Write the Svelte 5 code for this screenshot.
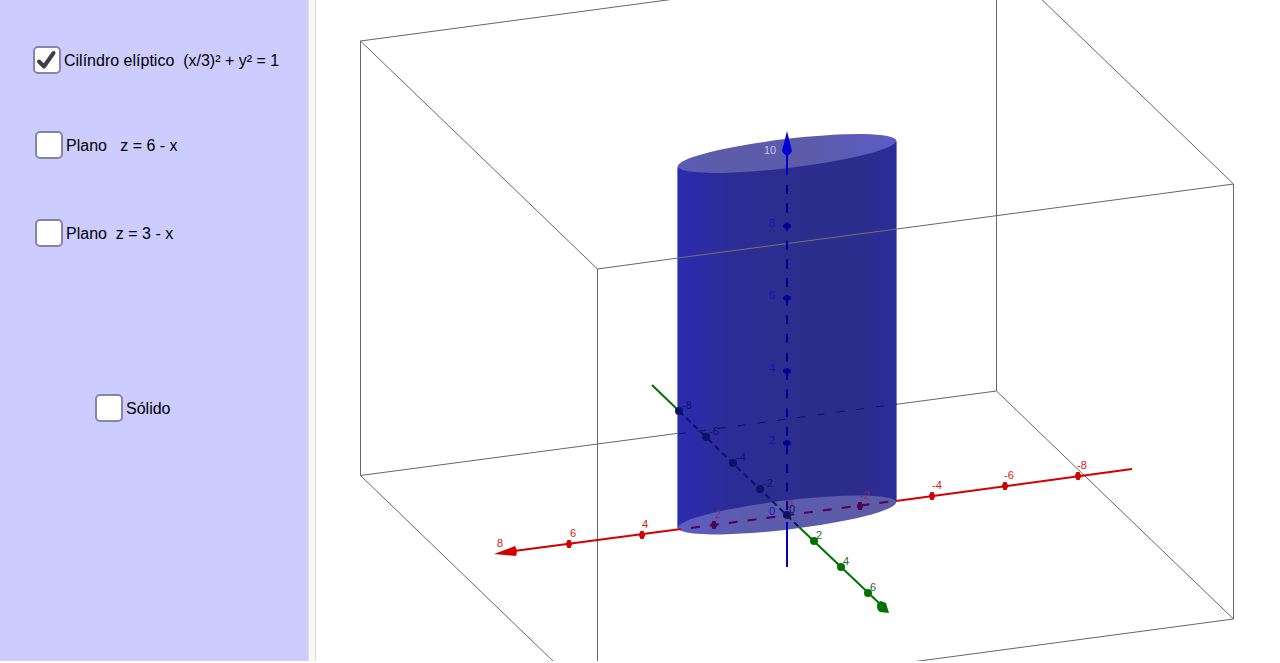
<script>
  let options = $state([
    { id: 'cylinder', label: 'Cilíndro elíptico  (x/3)² + y² = 1', checked: true },
    { id: 'plane-six', label: 'Plano   z = 6 - x', checked: false },
    { id: 'plane-three', label: 'Plano  z = 3 - x', checked: false },
    { id: 'solid', label: 'Sólido', checked: false }
  ]);

  const showCylinder = $derived(options[0].checked);

  const redTicks = [
    { x: 569, y: 544, label: '6', lx: 570, ly: 537 },
    { x: 642, y: 535, label: '4', lx: 642, ly: 528 },
    { x: 932, y: 496, label: '-4', lx: 932, ly: 489 },
    { x: 1005, y: 486, label: '-6', lx: 1004, ly: 479 },
    { x: 1078, y: 476, label: '-8', lx: 1077, ly: 469 }
  ];
  const innerRedTicks = [
    { x: 714, y: 525, label: '2', lx: 715, ly: 518 },
    { x: 860, y: 506, label: '-2', lx: 860, ly: 499 }
  ];
  const greenTicks = [
    { x: 814, y: 541, label: '2', lx: 816, ly: 539 },
    { x: 841, y: 567, label: '4', lx: 843, ly: 565 },
    { x: 868, y: 593, label: '6', lx: 870, ly: 591 }
  ];
  const innerGreenTicks = [
    { x: 679, y: 411, label: '-8', lx: 682, ly: 409 },
    { x: 706, y: 437, label: '-6', lx: 709, ly: 435 },
    { x: 733, y: 463, label: '-4', lx: 736, ly: 461 },
    { x: 760, y: 489, label: '-2', lx: 763, ly: 487 }
  ];
  const blueTicks = [
    { y: 226, label: '8' },
    { y: 298, label: '6' },
    { y: 371, label: '4' },
    { y: 443, label: '2' }
  ];
</script>

<main class="applet">
  <section class="panel" aria-label="Opções">
    {#each options as option (option.id)}
      <div class="option {option.id}">
        <span class="box">
          <input id={option.id} type="checkbox" bind:checked={option.checked} />
          {#if option.checked}
            <svg class="tick" viewBox="0 0 28 28" aria-hidden="true">
              <path d="M6 15.5 11 20.5 20.500 7" />
            </svg>
          {/if}
        </span>
        <label for={option.id}>{option.label}</label>
      </div>
    {/each}
  </section>
  <div class="divider"></div>
  <svg class="scene" viewBox="316 0 964 661">
    <defs>
      <linearGradient id="wall" x1="0" x2="1" y1="0" y2="0">
        <stop offset="0" stop-color="#2b2bb0" />
        <stop offset="0.06" stop-color="#2b2baa" />
        <stop offset="0.22" stop-color="#2c2c98" />
        <stop offset="0.5" stop-color="#2d2d8e" />
        <stop offset="0.85" stop-color="#2c2c8d" />
        <stop offset="1" stop-color="#2c2c98" />
      </linearGradient>
      <linearGradient id="cap" x1="0" x2="1" y1="0" y2="0">
        <stop offset="0" stop-color="#5c5cb4" />
        <stop offset="0.2" stop-color="#5c5ca9" />
        <stop offset="0.6" stop-color="#5c5cab" />
        <stop offset="1" stop-color="#5b5bc4" />
      </linearGradient>
      <linearGradient id="base" x1="0" x2="1" y1="0" y2="0">
        <stop offset="0" stop-color="#5c5cc2" />
        <stop offset="0.3" stop-color="#5c5caf" />
        <stop offset="1" stop-color="#5c5ca8" />
      </linearGradient>
    </defs>

    <path class="edge" d="M360.500 475.500 996.500 391V-44L360.500 41ZM996.500 391 1233.500 619M996.500 -44 1233.500 184" />

    {#if showCylinder}
      <path fill="url(#wall)" d="M677.500 167 896.500 141V502L677.500 528Z" />
      <path class="rim" d="M677.500 167V528M896.500 141V502" />
      <ellipse rx="110" ry="14.500" fill="url(#cap)" transform="translate(787 153.500) rotate(-6.800)" />
      <ellipse rx="110" ry="14.500" fill="url(#base)" transform="translate(787 515) rotate(-6.800)" />
      <path class="hidden-edge" d="M678 434 897 404" />
    {/if}

    <path class="edge" d="M360.500 41V475.500L597.500 704M360.500 41 597.500 269M597.500 269V704M1233.500 184V619L597.500 704" />
    <path class="edge" d="M597.500 269 678 258M897 229 1233.500 184" />
    <path class="front-edge" d="M678 258 897 229" />

    <g class="red">
      <path class="axis" d="M514 551 681 529M896 501 1132 469" />
      <path d="M494 554 515 546Q518 551 516 556Z" />
      <text x="497" y="547">8</text>
      {#each redTicks as t}
        <rect x={t.x - 2} y={t.y - 4} width="4" height="8" rx="1" />
        <rect x={t.x - 3} y={t.y - 2} width="6" height="4" rx="1" />
        <text x={t.lx} y={t.ly}>{t.label}</text>
      {/each}
    </g>
    <g class="purple">
      <path class="axis" stroke-dasharray="9 10" d="M691 528 894 501" />
      {#each innerRedTicks as t}
        <rect x={t.x - 2} y={t.y - 4} width="4" height="8" rx="1" />
        <rect x={t.x - 3} y={t.y - 2} width="6" height="4" rx="1" />
        <text x={t.lx} y={t.ly}>{t.label}</text>
      {/each}
      <text x="787" y="508">0</text>
    </g>

    <path class="green-tail" d="M652 385 679 411" />
    <g class="navy">
      <path class="axis" stroke-dasharray="6 4" d="M679 411 800 528" />
      {#each innerGreenTicks as t}
        <circle cx={t.x} cy={t.y} r="4" />
        <text x={t.lx} y={t.ly}>{t.label}</text>
      {/each}
      <text x="789" y="513">0</text>
    </g>
    <g class="green">
      <path class="axis" d="M799 527 880 604" />
      {#each greenTicks as t}
        <circle cx={t.x} cy={t.y} r="4" />
        <text x={t.lx} y={t.ly}>{t.label}</text>
      {/each}
      <path d="M877 606Q877 602 881 601L886 603 889 613 880 612Q877 610 877 606Z" />
    </g>

    <g class="blue">
      <path class="axis" d="M787 150V175M787 522V567" />
      <path d="M787 131 792 151Q790 155 787 156Q784 155 782 151Z" />
      <text class="top-number" x="764" y="154">10</text>
      <text class="origin" x="769" y="515">0</text>
    </g>
    <g class="inner-blue">
      <path class="axis" stroke-dasharray="9 9.600" d="M787 185V517" />
      {#each blueTicks as t}
        <rect x="783" y={t.y - 2} width="8" height="4" rx="2" />
        <circle cx="787" cy={t.y} r="3" />
        <text x="769" y={t.y + 1}>{t.label}</text>
      {/each}
    </g>
    <circle class="origin-dot" cx="787" cy="515" r="4" />
  </svg>
</main>

<style>
  :global(body) {
    margin: 0;
    background: #fff;
  }
  .applet {
    display: grid;
    grid-template-columns: 308px 8px minmax(0, 1fr);
    font-family: "Liberation Sans", Arial, sans-serif;
    font-size: 16px;
    color: #000;
  }
  .panel {
    box-sizing: border-box;
    padding: 46px 0 0 33px;
    background: #ccccff;
  }
  .divider {
    box-sizing: border-box;
    background: #f7f7f7;
    border-left: 1px solid #dcdcdc;
    border-right: 1px solid #dcdcdc;
  }
  .option {
    display: flex;
    align-items: center;
    gap: 3px;
    height: 28px;
    white-space: pre;
  }
  label {
    padding-top: 2px;
  }
  .plane-six {
    margin: 57px 0 0 2px;
  }
  .plane-three {
    margin: 60px 0 0 2px;
  }
  .solid {
    margin: 147px 0 0 62px;
  }
  .box {
    position: relative;
    width: 28px;
    height: 28px;
  }
  input {
    appearance: none;
    box-sizing: border-box;
    display: block;
    width: 28px;
    height: 28px;
    margin: 0;
    background: #fff;
    border: 2px solid #8585a8;
    border-radius: 5px;
  }
  .tick {
    position: absolute;
    inset: 0;
    pointer-events: none;
  }
  .tick path {
    fill: none;
    stroke: #3f3d49;
    stroke-width: 4;
    stroke-linecap: round;
    stroke-linejoin: round;
  }
  .scene {
    display: block;
    width: 100%;
    height: auto;
    font-size: 11px;
  }
  .edge, .front-edge, .hidden-edge {
    fill: none;
    stroke: #666;
    stroke-width: 1;
  }
  .front-edge {
    stroke: #73736f;
  }
  .hidden-edge {
    stroke: #101066;
    stroke-dasharray: 8 12;
  }
  .rim {
    stroke: #8080c8;
  }
  .axis, .green-tail {
    fill: none;
    stroke-width: 2;
  }
  .red { fill: #d20000; }
  .red .axis { stroke: #d20000; }
  .red text { fill: #dc1414; }
  .purple { fill: #520052; }
  .purple .axis { stroke: #520052; }
  .purple text { fill: #842b72; }
  .green { fill: #007300; }
  .green .axis, .green-tail { stroke: #007300; }
  .green text { fill: #2c652c; }
  .navy { fill: #09136b; }
  .navy .axis { stroke: #09136b; }
  .blue { fill: #0000d9; }
  .blue .axis { stroke: #0000c8; }
  .blue .top-number { fill: #c4c4fa; }
  .blue .origin { fill: #1515bd; }
  .inner-blue { fill: #000096; }
  .inner-blue .axis { stroke: #000096; }
  .inner-blue text { fill: #1414b4; }
  .origin-dot { fill: #100f5c; }
</style>
